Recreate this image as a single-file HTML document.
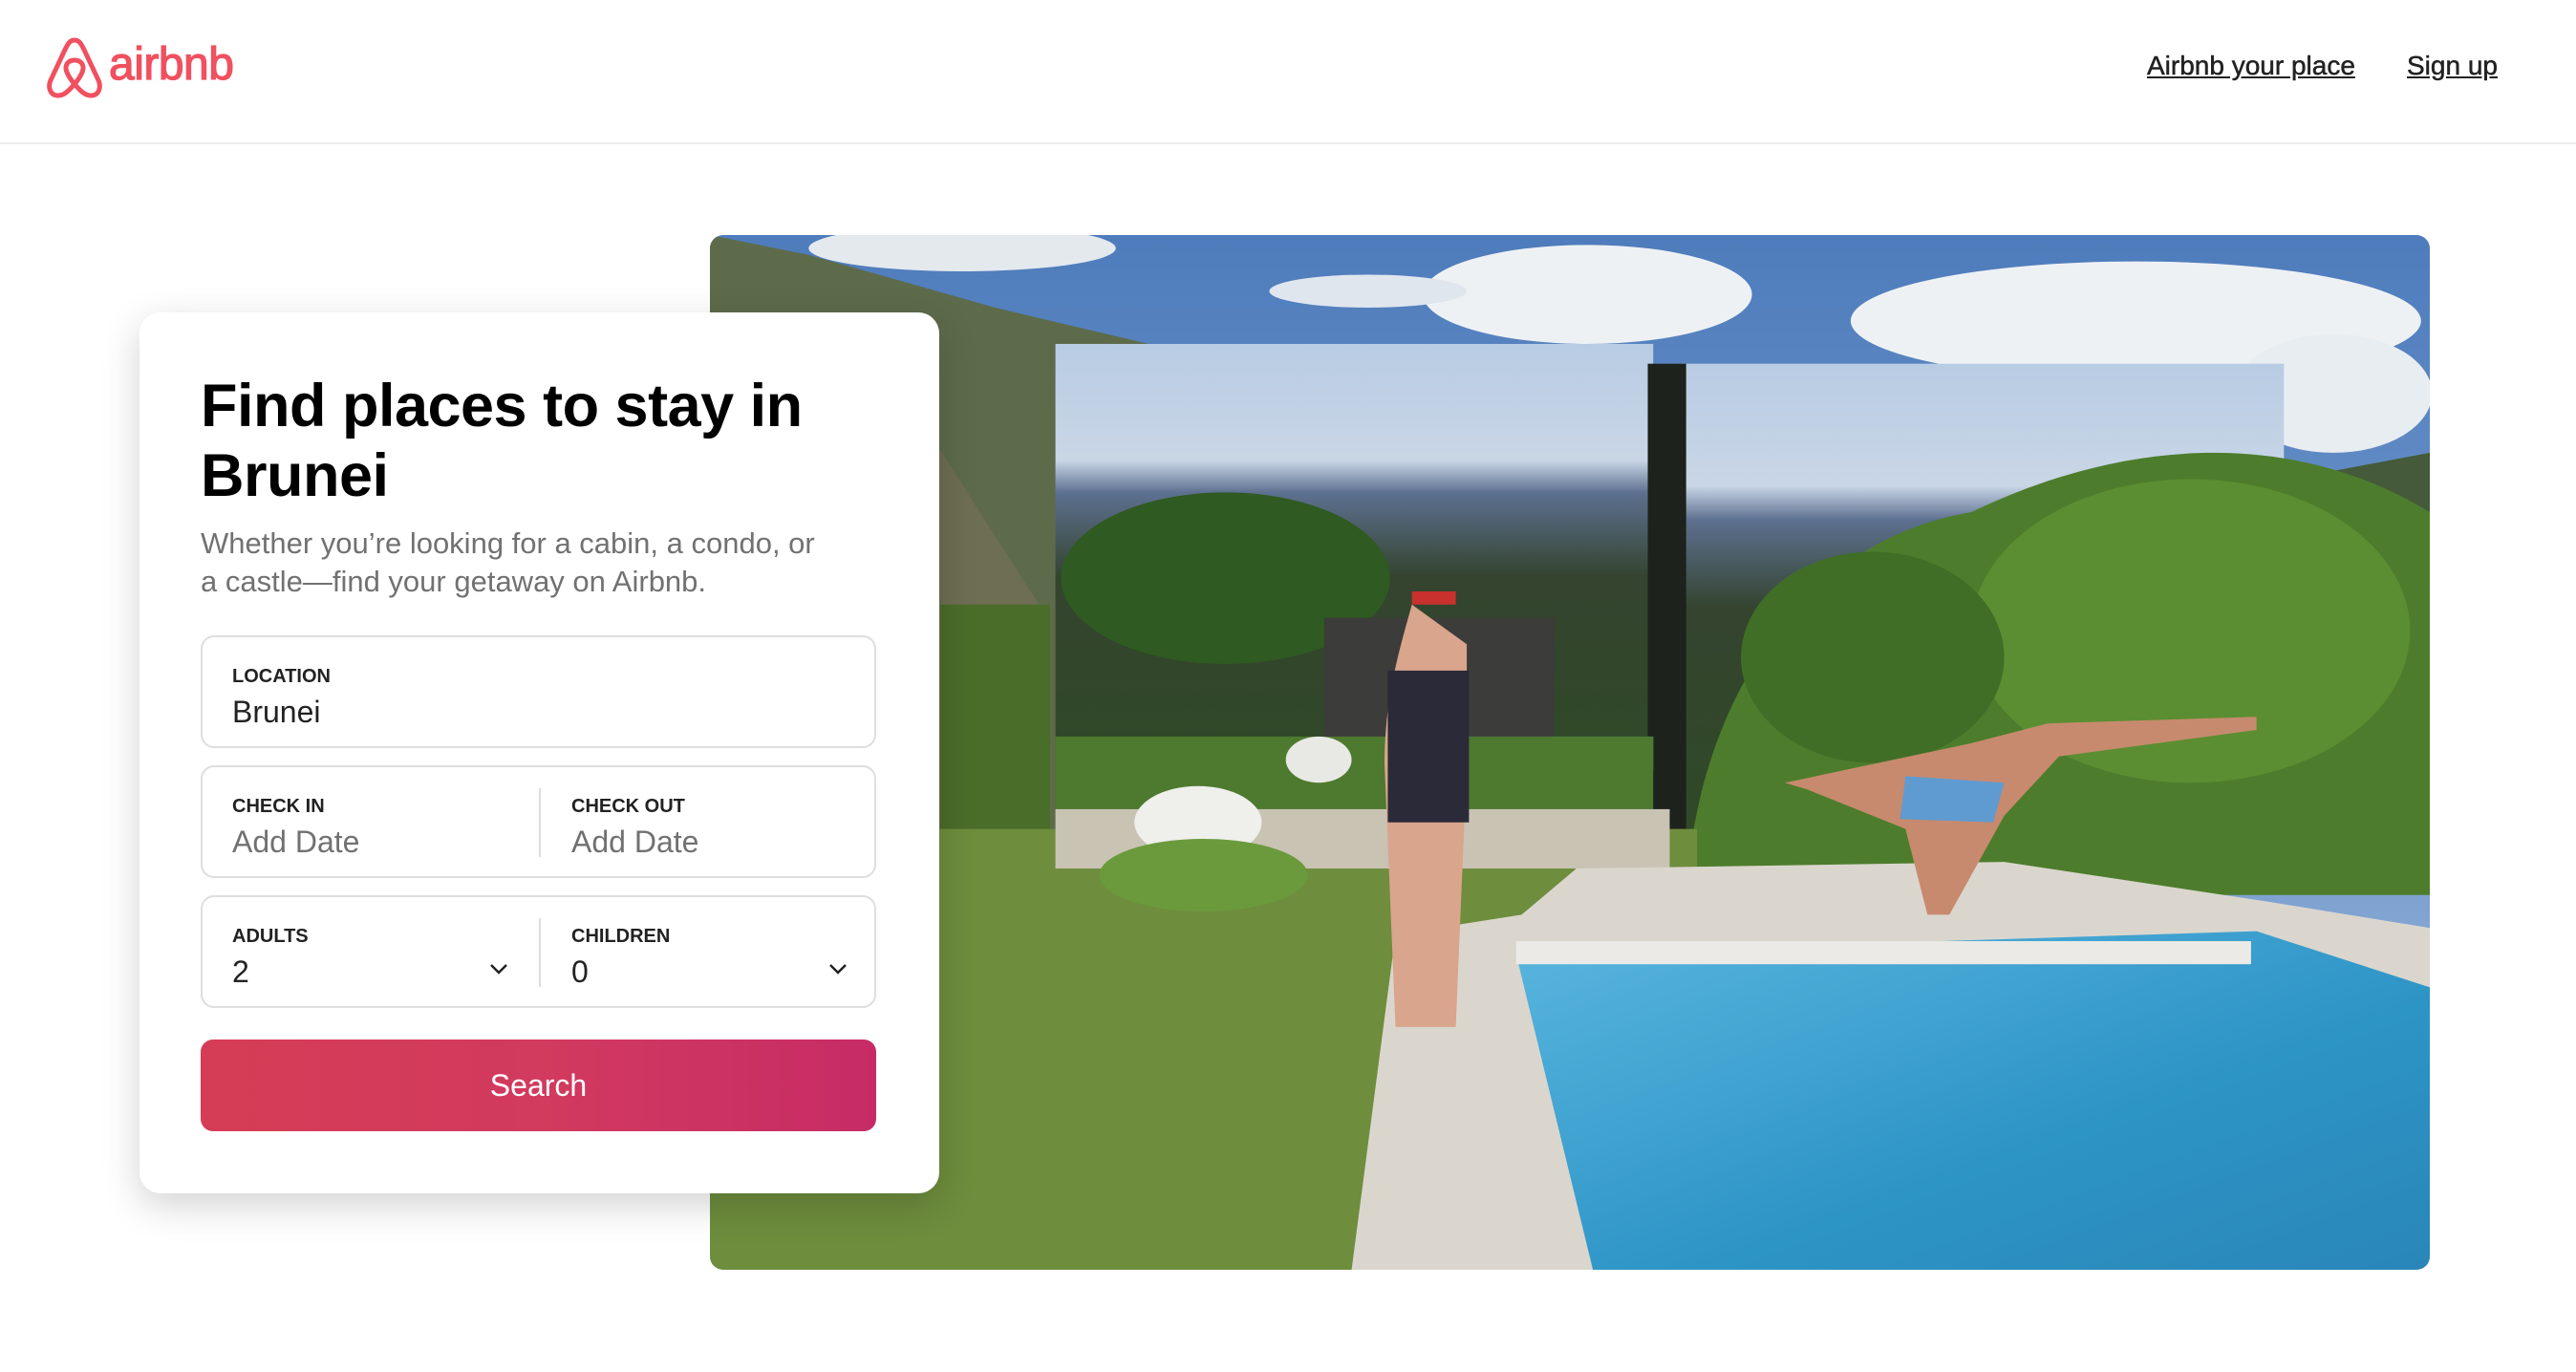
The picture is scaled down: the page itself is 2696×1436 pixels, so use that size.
<!DOCTYPE html>
<html><head><meta charset="utf-8">
<style>
*{margin:0;padding:0;box-sizing:border-box}
body{width:2696px;height:1436px;background:#fff;font-family:"Liberation Sans",Arial,sans-serif;position:relative;overflow:hidden;color:#222}
.hdr{position:absolute;left:0;top:0;width:2696px;height:151px;border-bottom:2px solid #ebebeb}
.logo{position:absolute;left:47px;top:38px}
.logotext{position:absolute;left:114px;top:40px;font-size:48px;font-weight:normal;letter-spacing:-0.5px;color:#f0505f;-webkit-text-stroke:1.2px #f0505f}
.nav{position:absolute;top:53px;font-size:28px;color:#222;text-decoration:underline;-webkit-text-stroke:0.5px #222}
.img{position:absolute;left:743px;top:246px;width:1800px;height:1083px;border-radius:14px;overflow:hidden}
.card{position:absolute;left:146px;top:327px;width:837px;height:922px;background:#fff;border-radius:22px;box-shadow:0 12px 40px rgba(0,0,0,.18)}
h1{position:absolute;left:64px;top:62px;font-size:63px;line-height:73px;font-weight:bold;color:#000;letter-spacing:-0.5px}
.sub{position:absolute;left:64px;top:222px;width:680px;font-size:31px;line-height:40px;color:#717171}
.box{position:absolute;left:64px;width:707px;height:118px;border:2px solid #dedede;border-radius:14px}
.lbl{position:absolute;top:30px;font-size:20px;font-weight:bold;color:#222}
.val{position:absolute;top:60px;font-size:32px;color:#222}
.ph{color:#717171}
.div{position:absolute;left:352px;top:22px;width:2px;height:72px;background:#dedede}
.chev{position:absolute;top:68px}
.btn{position:absolute;left:64px;top:761px;width:707px;height:96px;border-radius:13px;background:linear-gradient(90deg,#d53c55,#d23a5e 50%,#c72b66);color:#fff;font-size:32px;text-align:center;line-height:96px}
</style></head><body>
<div class="hdr">
<svg class="logo" width="62" height="66" viewBox="0 0 62 66"><path d="M31 4 C26 4 24 8 21 14 L6 46 C3 53 5 62 14 62 C20 62 25 57 31 50 C37 57 42 62 48 62 C57 62 59 53 56 46 L41 14 C38 8 36 4 31 4 Z M31 50 C26 44 22 38 22 33 C22 28 26 25 31 25 C36 25 40 28 40 33 C40 38 36 44 31 50 Z" fill="none" stroke="#f0505f" stroke-width="5" stroke-linejoin="round"/></svg>
<div class="logotext">airbnb</div>
<div class="nav" style="left:2247px">Airbnb your place</div>
<div class="nav" style="left:2519px">Sign up</div>
</div>
<div class="img">
<svg width="1800" height="1083" viewBox="0 0 1568 1568" preserveAspectRatio="none">
<defs>
<linearGradient id="sky" x1="0" y1="0" x2="0" y2="1"><stop offset="0" stop-color="#4e7cbc"/><stop offset="1" stop-color="#9cb8dc"/></linearGradient>
<linearGradient id="mir" x1="0" y1="0" x2="0" y2="1"><stop offset="0" stop-color="#b8cce4"/><stop offset="0.25" stop-color="#c9d6e6"/><stop offset="0.32" stop-color="#5d7090"/><stop offset="0.5" stop-color="#34442f"/><stop offset="1" stop-color="#2f4a26"/></linearGradient>
<linearGradient id="pool" x1="0" y1="0" x2="1" y2="1"><stop offset="0" stop-color="#5ab6df"/><stop offset="0.6" stop-color="#2d94c6"/><stop offset="1" stop-color="#2a86b8"/></linearGradient>
</defs>
<rect width="1568" height="1568" fill="url(#sky)"/>
<ellipse cx="800" cy="90" rx="150" ry="75" fill="#eef1f4"/>
<ellipse cx="600" cy="85" rx="90" ry="25" fill="#dfe6ee"/>
<ellipse cx="1300" cy="130" rx="260" ry="90" fill="#eef1f4"/>
<ellipse cx="1480" cy="240" rx="90" ry="90" fill="#e8edf2"/>
<ellipse cx="230" cy="20" rx="140" ry="35" fill="#e4e9ee"/>
<polygon points="0,0 90,30 260,110 400,165 400,1000 0,1000" fill="#5d6b4b"/>
<polygon points="0,200 200,300 300,560 300,1000 0,1000" fill="#6d6e52"/>
<polygon points="1440,370 1568,330 1568,700 1440,700" fill="#445a3a"/>
<rect x="315" y="165" width="545" height="705" fill="url(#mir)"/>
<rect x="885" y="195" width="550" height="740" fill="url(#mir)"/>
<rect x="855" y="195" width="35" height="740" fill="#1d221c"/>
<ellipse cx="470" cy="520" rx="150" ry="130" fill="#2f5a22"/>
<rect x="560" y="580" width="210" height="180" fill="#3c3c3a"/>
<rect x="690" y="760" width="170" height="50" fill="#4a9ccb"/>
<rect x="315" y="760" width="545" height="110" fill="#4d7a2e"/>
<path d="M890 1000 C900 700 1000 460 1150 420 C1300 300 1450 300 1568 420 L1568 1000 Z" fill="#4d7d2c"/>
<ellipse cx="1350" cy="600" rx="200" ry="230" fill="#5b8e32"/>
<ellipse cx="1060" cy="640" rx="120" ry="160" fill="#406e26"/>
<rect x="210" y="560" width="100" height="360" fill="#4a6d2a"/>
<rect x="0" y="900" width="900" height="668" fill="#6e8d3d"/>
<rect x="315" y="870" width="560" height="90" fill="#c9c3b4"/>
<ellipse cx="445" cy="890" rx="58" ry="55" fill="#efefeb"/>
<ellipse cx="555" cy="795" rx="30" ry="35" fill="#e8e8e4"/>
<ellipse cx="450" cy="970" rx="95" ry="55" fill="#6b9a3c"/>
<polygon points="585,1568 625,1060 740,1030 790,960 1180,950 1420,1010 1568,1050 1568,1568" fill="#dad6ce"/>
<polygon points="805,1568 735,1090 1410,1055 1568,1140 1568,1568" fill="url(#pool)"/>
<rect x="735" y="1070" width="670" height="35" fill="#ebeae6"/>
<path d="M640 560 C630 620 615 700 615 800 L625 1200 L680 1200 L690 800 L690 620 Z" fill="#d9a58c"/>
<rect x="618" y="660" width="74" height="230" fill="#2a2a38"/>
<rect x="640" y="540" width="40" height="20" fill="#c8312e"/>
<path d="M980 830 L1150 770 L1220 740 L1410 730 L1410 750 L1230 790 L1180 880 L1130 1030 L1110 1030 L1090 900 L1000 840 Z" fill="#c78a6e"/>
<polygon points="1090,820 1180,830 1170,890 1085,885" fill="#5f9bd0"/>
</svg>
</div>
<div class="card">
<h1>Find places to stay in<br>Brunei</h1>
<div class="sub">Whether you’re looking for a cabin, a condo, or<br>a castle—find your getaway on Airbnb.</div>
<div class="box" style="top:338px"><div class="lbl" style="left:31px">LOCATION</div><div class="val" style="left:31px">Brunei</div></div>
<div class="box" style="top:474px"><div class="lbl" style="left:31px">CHECK IN</div><div class="val ph" style="left:31px">Add Date</div><div class="div"></div><div class="lbl" style="left:386px">CHECK OUT</div><div class="val ph" style="left:386px">Add Date</div></div>
<div class="box" style="top:610px"><div class="lbl" style="left:31px">ADULTS</div><div class="val" style="left:31px">2</div><svg class="chev" style="left:300px" width="20" height="14" viewBox="0 0 20 14"><path d="M2 3 L10 11 L18 3" fill="none" stroke="#222" stroke-width="2.5"/></svg><div class="div"></div><div class="lbl" style="left:386px">CHILDREN</div><div class="val" style="left:386px">0</div><svg class="chev" style="left:655px" width="20" height="14" viewBox="0 0 20 14"><path d="M2 3 L10 11 L18 3" fill="none" stroke="#222" stroke-width="2.5"/></svg></div>
<div class="btn">Search</div>
</div>
</body></html>
